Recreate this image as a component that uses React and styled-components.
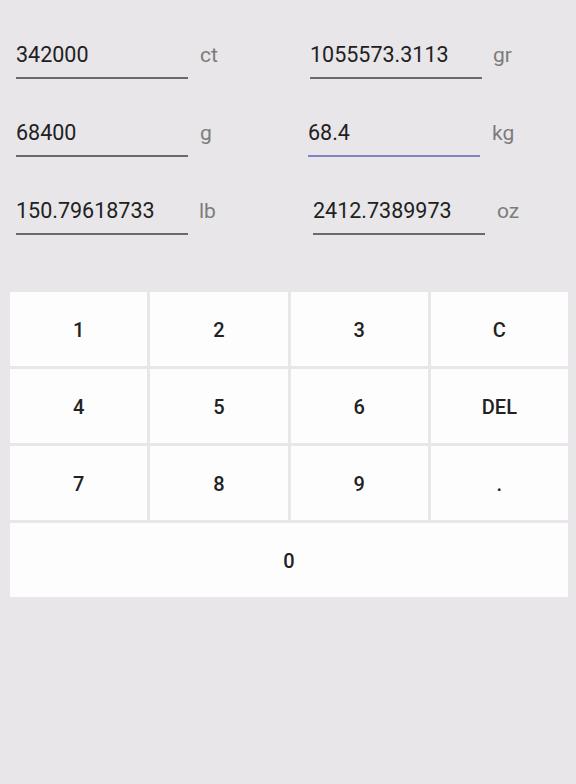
import React from "react";
import styled, { createGlobalStyle } from "styled-components";

const Global = createGlobalStyle`
  html, body { margin: 0; padding: 0; background: #e8e6e9; }
  body { font-family: Roboto, "Noto Sans", sans-serif; }
  * { box-sizing: border-box; }
`;

const Page = styled.div`
  width: 576px;
  height: 784px;
  background: #e8e6e9;
  padding-top: 30px;
`;

const Fields = styled.div`
  display: grid;
  grid-template-columns: 288px 288px;
  grid-auto-rows: 78px;
`;

const Field = styled.div`
  display: flex;
  align-items: flex-start;
  padding-left: ${(p) => p.$shift}px;
`;

const Input = styled.div`
  width: 172px;
  height: 49px;
  padding-top: 12px;
  font-size: 21.5px;
  line-height: 26px;
  color: #212121;
  border-bottom: 2px solid ${(p) => (p.$active ? "#7c86c4" : "#6a6a6a")};
  white-space: nowrap;
  overflow: hidden;
`;

const Unit = styled.span`
  margin-left: ${(p) => p.$gap}px;
  padding-top: 12px;
  font-size: 21px;
  line-height: 26px;
  color: #7c7c7c;
`;

const Keypad = styled.div`
  margin: 28px 8px 0 10px;
  display: grid;
  grid-template-columns: repeat(4, 1fr);
  grid-auto-rows: 74px;
  gap: 3px;
`;

const Key = styled.div`
  grid-column: ${(p) => (p.$wide ? "1 / span 4" : "auto")};
  background: #fdfdfd;
  display: flex;
  align-items: center;
  justify-content: center;
  padding-top: 2px;
  font-size: 20px;
  font-weight: 500;
  color: #222222;
`;

const fields = [
  { v: "342000", u: "ct", shift: 16, gap: 12 },
  { v: "1055573.3113", u: "gr", shift: 22, gap: 11 },
  { v: "68400", u: "g", shift: 16, gap: 12 },
  { v: "68.4", u: "kg", shift: 20, gap: 12, active: true },
  { v: "150.79618733", u: "lb", shift: 16, gap: 11 },
  { v: "2412.7389973", u: "oz", shift: 25, gap: 12 },
];

const keys = ["1", "2", "3", "C", "4", "5", "6", "DEL", "7", "8", "9", "."];

export default function App() {
  return (
    <>
      <Global />
      <Page>
        <Fields>
          {fields.map((f) => (
            <Field key={f.u} $shift={f.shift}>
              <Input $active={f.active}>{f.v}</Input>
              <Unit $gap={f.gap}>{f.u}</Unit>
            </Field>
          ))}
        </Fields>
        <Keypad>
          {keys.map((k) => (
            <Key key={k}>{k}</Key>
          ))}
          <Key $wide>0</Key>
        </Keypad>
      </Page>
    </>
  );
}
